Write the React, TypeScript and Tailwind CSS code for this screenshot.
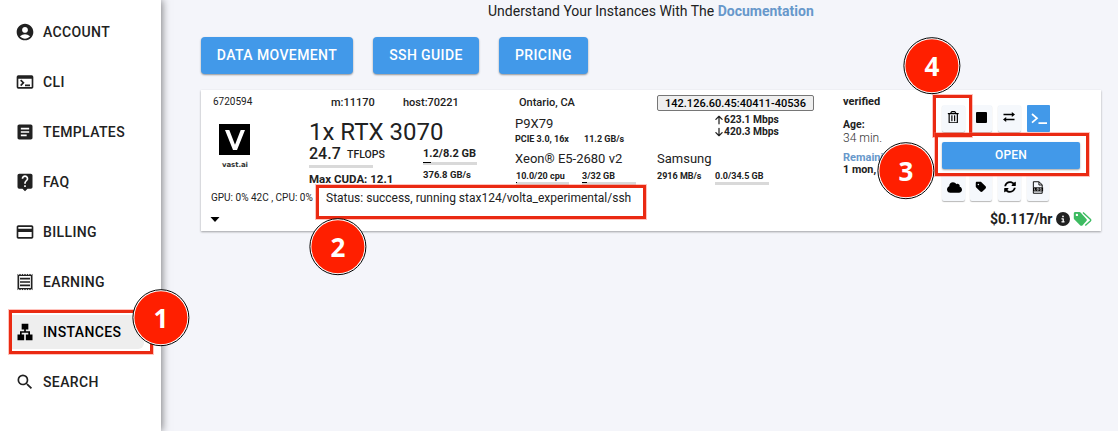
import type { ReactNode } from 'react';
import { MdAccountCircle, MdOutlineTerminal, MdArticle, MdLiveHelp, MdCreditCard, MdOutlineReceipt, MdLan, MdSearch } from 'react-icons/md';
import { FaArrowUp, FaArrowDown, FaCircleInfo, FaCloud, FaTag } from 'react-icons/fa6';
import { FaRegTrashAlt, FaSyncAlt } from 'react-icons/fa';

const nav = [
  { label: 'ACCOUNT', icon: <MdAccountCircle /> },
  { label: 'CLI', icon: <MdOutlineTerminal /> },
  { label: 'TEMPLATES', icon: <MdArticle /> },
  { label: 'FAQ', icon: <MdLiveHelp /> },
  { label: 'BILLING', icon: <MdCreditCard /> },
  { label: 'EARNING', icon: <MdOutlineReceipt /> },
  { label: 'INSTANCES', icon: <MdLan />, active: true },
  { label: 'SEARCH', icon: <MdSearch /> },
];

function Badge({ n, place }: { n: number; place: string }) {
  return (
    <div className={`absolute z-20 flex size-[57px] translate-x-[0.4px] translate-y-[0.2px] items-center justify-center rounded-full border border-black bg-white p-px ${place}`}>
      <div className="flex size-full items-center justify-center rounded-full bg-[#ff1f00] pt-px font-['Open_Sans'] text-[26px] leading-none font-bold text-white">{n}</div>
    </div>
  );
}

function Frame({ place }: { place: string }) {
  return <div className={`pointer-events-none absolute z-10 border-3 border-[#ea2a12] ring-1 ring-[#ff6a5a]/40 ${place}`} />;
}

function Meter({ fill, className }: { fill: string; className: string }) {
  return (
    <div className={`h-[3px] bg-[#d9d9d9] ${className}`}>
      <div className={`h-px bg-black ${fill}`} />
    </div>
  );
}

function Tool({ children, className = '' }: { children: ReactNode; className?: string }) {
  return (
    <button className={`flex h-[27px] items-center justify-center rounded-[2px] bg-[#f5f8fc] text-black shadow-[0_1px_1px_rgba(0,0,0,0.28)] ${className}`}>{children}</button>
  );
}

function LogFile() {
  return (
    <svg viewBox="0 0 12 14" className="h-[13px] w-3" fill="none" stroke="currentColor" strokeWidth="1">
      <path d="M1 7V.8h6L10.500 4v3M7 1v3.300h3.500M1 11v2.200h9.500V11" />
      <path d="M.5 6.800h11v4.400H.5z" fill="currentColor" stroke="none" />
      <path d="M2.200 7.800v2.200h1.300M5 7.900h1.400v2.100H5zM9.900 7.900H8.200v2.100h1.700V9" stroke="#fff" strokeWidth=".6" />
    </svg>
  );
}

function Swap() {
  return (
    <svg viewBox="0 0 12 10" className="mr-px h-[10px] w-3" fill="none" stroke="currentColor" strokeWidth="1.400">
      <path d="M.5 2.500h9M11.500 7.500h-9" />
      <path d="M8.800 0L12 2.500 8.800 5zM3.200 5L0 7.500 3.200 10z" fill="currentColor" stroke="none" />
    </svg>
  );
}

function Tags() {
  return (
    <svg viewBox="0 0 19 16" className="h-4 w-[19px]" fill="#3dbb61">
      <path fillRule="evenodd" d="M.8 2.500v4.700c0 .5.200 1 .6 1.400l5.900 5.800c.6.600 1.500.6 2.100 0l4-4.300c.6-.6.6-1.500 0-2.100L7.800 1.700C7.400 1.300 6.900 1.100 6.400 1.100H2.300C1.500 1.100.8 1.700.8 2.500zm3.100.2a1.200 1.200 0 1 0 0 2.400 1.200 1.200 0 0 0 0-2.400z" />
      <path d="M10 1.500l7.300 6.700c.5.500.5 1.200 0 1.700l-5 4.600" fill="none" stroke="#3dbb61" strokeWidth="1.400" />
    </svg>
  );
}

export default function App() {
  return (
    <div className="relative flex h-[431px] w-[1118px] overflow-hidden bg-[#f4f5fa] font-[Roboto,sans-serif] text-[#212121]">
      <aside className="z-[1] flex w-[161px] shrink-0 flex-col bg-white pt-[7px] shadow-[1px_0_8px_rgba(0,0,0,0.5)]">
        {nav.map((item) => (
          <a key={item.label} className="flex h-[50px] items-center">
            <span className={`ml-3 flex h-[34px] w-[132px] items-center rounded-r-md pl-[3px] ${item.active ? 'bg-[#eee] text-black' : ''}`}>
              <span className="text-[20px]">{item.icon}</span>
              <span className="ml-2 text-[14px] leading-5 font-medium tracking-[0.37px]">{item.label}</span>
            </span>
          </a>
        ))}
      </aside>

      <main className="w-[957px] pl-10">
        <p className="h-[37px] pl-[287px] text-[14px] leading-[22px] whitespace-nowrap">
          Understand Your Instances With The <b className="text-[#6798cb]">Documentation</b>
        </p>
        <div className="flex h-[37px] gap-5 text-[14px] font-medium tracking-[0.4px] whitespace-nowrap text-white">
          <button className="w-[152px] rounded bg-[#4299e9] shadow-[0_1px_2px_rgba(0,0,0,0.4)]">DATA MOVEMENT</button>
          <button className="w-[106px] rounded bg-[#4299e9] shadow-[0_1px_2px_rgba(0,0,0,0.4)]">SSH GUIDE</button>
          <button className="w-[89px] rounded bg-[#4299e9] shadow-[0_1px_2px_rgba(0,0,0,0.4)]">PRICING</button>
        </div>

        <section className="mt-4 h-[141px] w-[900px] bg-white whitespace-nowrap shadow-[0_1px_2px_rgba(0,0,0,0.35)]">
          <div className="flex h-[141px]">
            <div className="w-[108px] shrink-0">
              <div className="pt-[5px] pl-3 text-[10px] leading-[14px]">6720594</div>
              <div className="mt-[15px] ml-[18px] flex size-[31px] items-center justify-center bg-black">
                <svg viewBox="0 0 20 20" className="size-5"><path d="M0 0h4.300l5.700 14.700L15.700 0H20l-8 20H8z" fill="#fff" /></svg>
              </div>
              <div className="ml-[21px] pt-1 font-['DejaVu_Sans'] text-[7px] leading-3 font-bold tracking-[-0.1px] text-[#333]">vast.ai</div>
              <div className="mt-5 pl-[10px] text-[10px] leading-[14px]">GPU: 0% 42C , CPU: 0%</div>
              <svg viewBox="0 0 10 5" className="mt-3 ml-[9px] h-[5px] w-[10px]"><path d="M.5 0h9L5 5z" fill="#000" /></svg>
            </div>

            <div className="w-[206px] shrink-0">
              <div className="flex pt-[6px] pl-[22px] text-[11px] leading-[14px] font-medium">
                <span className="w-[72px]">m:11170</span>
                <span>host:70221</span>
              </div>
              <div className="mt-2 h-7 text-[24px] leading-7">1x RTX 3070</div>
              <div className="flex h-[15px] items-center">
                <span className="w-[38px] text-[16px] leading-[15px] font-medium">24.7</span>
                <span className="w-[76px] pt-[3px] text-[10.500px] leading-3 font-medium">TFLOPS</span>
                <span className="text-[11px] leading-3 font-bold">1.2/8.2 GB</span>
              </div>
              <div className="flex h-[7px]">
                <Meter className="mt-[4px] w-[64px]" fill="w-0" />
                <Meter className="mt-px ml-[50px] w-[54px]" fill="w-2" />
              </div>
              <div className="flex h-5">
                <span className="w-[114px] pt-[4px] text-[11.500px] leading-[14px] font-bold">Max CUDA: 12.1</span>
                <span className="pt-px text-[9.500px] leading-3 font-bold">376.8 GB/s</span>
              </div>
              <div className="mt-[3px] pl-[17px] text-[12px] leading-[14px]">Status: success, running stax124/volta_experimental/ssh</div>
            </div>

            <div className="w-[142px] shrink-0">
              <div className="pt-[6px] pl-1 text-[11px] leading-[14px] font-medium">Ontario, CA</div>
              <div className="mt-[6px] text-[13px] leading-4">P9X79</div>
              <div className="mt-px flex text-[9px] leading-3 font-bold">
                <span className="w-[69px]">PCIE 3.0, 16x</span>
                <span>11.2 GB/s</span>
              </div>
              <div className="mt-[6px] text-[13px] leading-4">Xeon® E5-2680 v2</div>
              <div className="mt-[3px] flex pl-px text-[9px] leading-3 font-bold">
                <span className="w-[66px]">10.0/20 cpu</span>
                <span>3/32 GB</span>
              </div>
              <div className="flex pl-px">
                <Meter className="w-[53px]" fill="w-px" />
                <Meter className="ml-[13px] w-[54px]" fill="w-[5px]" />
              </div>
            </div>

            <div className="w-[185px] shrink-0">
              <div className="mt-[5px] flex h-4 w-[157px] items-center justify-center rounded-[2px] border border-[#767676] bg-[#efefef] pt-[2px] text-[11px] font-medium text-black">142.126.60.45:40411-40536</div>
              <div className="mt-[3px] ml-[57px] text-[10.250px] leading-3 font-bold">
                <div className="flex items-center"><FaArrowUp className="size-[10px]" />623.1 Mbps</div>
                <div className="flex items-center"><FaArrowDown className="size-[10px]" />420.3 Mbps</div>
              </div>
              <div className="mt-[13px] text-[13px] leading-4">Samsung</div>
              <div className="mt-[3px] flex text-[9px] leading-3 font-bold">
                <span className="w-[58px]">2916 MB/s</span>
                <span>0.0/34.5 GB</span>
              </div>
              <Meter className="ml-[58px] w-[54px]" fill="w-0" />
            </div>

            <div className="w-[100px] shrink-0 pl-px text-[11px]">
              <div className="pt-[5px] leading-[14px] font-bold">verified</div>
              <div className="mt-[9px] text-[10.500px] leading-[14px] font-bold">Age:</div>
              <div className="text-[12px] leading-[13px] font-light text-[#333]">34 min.</div>
              <div className="mt-[6px] leading-[13px] font-bold text-[#6798cb]">Remaining:</div>
              <div className="text-[10.800px] leading-[12px] font-bold">1 mon, 3 d</div>
            </div>

            <div className="w-[159px] shrink-0">
              <div className="mt-[15px] flex">
                <Tool className="w-[23px] pb-[3px] text-[12.500px]"><FaRegTrashAlt /></Tool>
                <Tool className="ml-[5px] w-[22px] pb-[3px]"><span className="size-[11px] rounded-[1px] bg-black" /></Tool>
                <Tool className="ml-[6px] w-[23px] pb-[3px]"><Swap /></Tool>
                <button className="ml-[6px] flex h-[27px] w-[23px] items-center justify-center rounded-[1px] bg-[#4299e9]">
                  <svg viewBox="0 0 16 12" className="h-3 w-4" fill="none" stroke="#fff" strokeWidth="1.700"><path d="M1 1l5 4.300L1 9.600M7.500 10.200H16" /></svg>
                </button>
              </div>
              <button className="mt-[10px] block h-[27px] w-[138px] rounded-[2px] bg-[#4299e9] pb-[2px] text-[12px] font-medium tracking-[0.2px] text-white shadow-[0_1px_2px_rgba(0,0,0,0.35)]">OPEN</button>
              <div className="mt-[5px] flex">
                <Tool className="w-[23px] pb-px pl-px text-[15px]"><FaCloud /></Tool>
                <Tool className="ml-[5px] w-[22px] pb-px text-[12px]"><FaTag /></Tool>
                <Tool className="ml-[6px] w-[23px] pb-px text-[12px]"><FaSyncAlt /></Tool>
                <Tool className="ml-[6px] w-[22px] pb-px"><LogFile /></Tool>
              </div>
              <div className="mt-[10px] ml-12 flex h-4 items-center">
                <span className="w-[66px] text-[14px] font-bold">$0.117/hr</span>
                <FaCircleInfo className="size-[14px]" />
                <span className="ml-[3px]"><Tags /></span>
              </div>
            </div>
          </div>
        </section>
      </main>

      <Frame place="left-[9px] top-[310px] h-[44px] w-[144px]" />
      <Frame place="left-[316px] top-[185px] h-[34px] w-[330px]" />
      <Frame place="left-[933px] top-[95px] h-[42px] w-[39px]" />
      <Frame place="left-[935px] top-[133px] h-[43px] w-[154px]" />
      <Badge n={1} place="left-[132px] top-[289px]" />
      <Badge n={2} place="left-[309px] top-[218px]" />
      <Badge n={3} place="left-[877px] top-[142px]" />
      <Badge n={4} place="left-[903px] top-[37px]" />
    </div>
  );
}
